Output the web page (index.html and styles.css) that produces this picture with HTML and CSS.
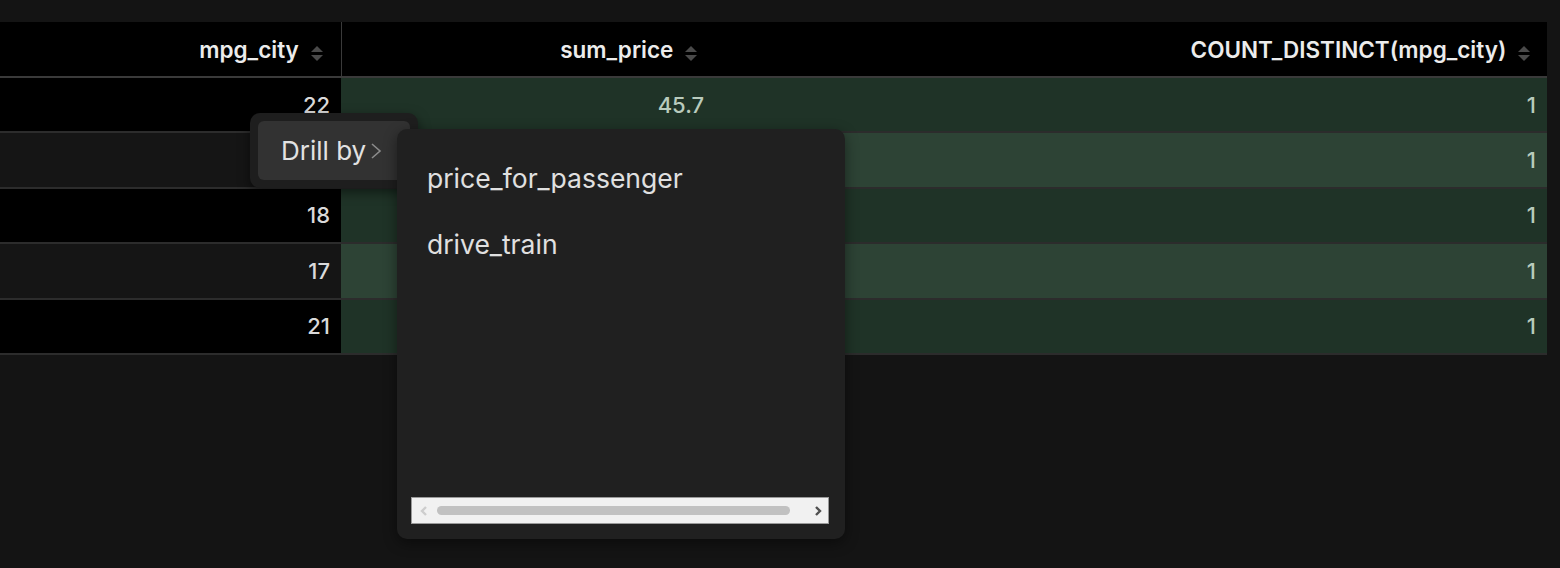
FILE: index.html
```html
<!DOCTYPE html>
<html lang="en">
<head>
  <meta charset="UTF-8" />
  <title>Drill by</title>
  <link rel="stylesheet" href="styles.css">
</head>
<body>
  <div class="chart">
    <table class="grid">
      <thead>
        <tr>
          <th class="col-city">mpg_city <span class="sort"></span></th>
          <th class="col-price">sum_price <span class="sort"></span></th>
          <th class="col-count">COUNT_DISTINCT(mpg_city) <span class="sort"></span></th>
        </tr>
      </thead>
      <tbody>
        <tr><td>22</td><td class="metric">45.7</td><td class="metric">1</td></tr>
        <!-- values under the open menu are hidden -->
        <tr><td></td><td class="metric"></td><td class="metric">1</td></tr>
        <tr><td>18</td><td class="metric"></td><td class="metric">1</td></tr>
        <tr><td>17</td><td class="metric"></td><td class="metric">1</td></tr>
        <tr><td>21</td><td class="metric"></td><td class="metric">1</td></tr>
      </tbody>
    </table>

    <div class="context-menu">
      <div class="menu-item">
        Drill by
        <svg class="chevron" width="14" height="20" viewBox="0 0 14 20">
          <polyline points="3,3 11,10 3,17" fill="none" stroke="#8c8c8c" stroke-width="1.6"/>
        </svg>
      </div>
    </div>

    <div class="submenu">
      <ul class="submenu-list">
        <li>price_for_passenger</li>
        <li>drive_train</li>
      </ul>
      <div class="scrollbar">
        <svg class="arrow" width="8" height="10" viewBox="0 0 8 10">
          <polyline points="6,1 2,5 6,9" fill="none" stroke="#cdcdcd" stroke-width="2.4"/>
        </svg>
        <span class="thumb"></span>
        <svg class="arrow" width="8" height="10" viewBox="0 0 8 10">
          <polyline points="2,1 6,5 2,9" fill="none" stroke="#505050" stroke-width="2.4"/>
        </svg>
      </div>
    </div>
  </div>
</body>
</html>
```

FILE: styles.css
```css
* {
  box-sizing: border-box;
  margin: 0;
  padding: 0;
}

body {
  background: #141414;
  font-family: Inter, 'Noto Sans', sans-serif;
  color: #d9d9d9;
  width: 1560px;
  height: 568px;
  overflow: hidden;
}

.chart {
  position: relative;
  padding-top: 22px;
  height: 568px;
}

.grid {
  width: 1547px;
  border-collapse: collapse;
  table-layout: fixed;
}

.grid th {
  background: #000;
  color: #ececec;
  font-size: 22.5px;
  font-weight: 600;
  text-align: right;
  height: 55px;
  padding: 0 16px 0 0;
  border-bottom: 2px solid #3a3a3a;
  white-space: nowrap;
}

.grid th.col-city {
  width: 341px;
  padding-right: 18px;
  border-right: 1px solid #3a3a3a;
}

.grid th.col-price {
  width: 371px;
  padding-right: 15px;
}

.grid th.col-count {
  padding-right: 17px;
}

.sort {
  display: inline-block;
  width: 12px;
  height: 15px;
  margin-left: 6px;
  vertical-align: -3px;
  position: relative;
}

.sort::before,
.sort::after {
  content: "";
  position: absolute;
  left: 0;
  border-left: 6px solid transparent;
  border-right: 6px solid transparent;
}

.sort::before {
  top: 0;
  border-bottom: 6px solid #4a4a4a;
}

.sort::after {
  bottom: 0;
  border-top: 6px solid #4a4a4a;
}

.grid td {
  height: 55.4px;
  font-size: 22px;
  font-weight: 500;
  text-align: right;
  padding: 0 11px 0 0;
  border-bottom: 2px solid #2c2c2c;
  background: #000;
  color: #dadada;
}

.grid tbody tr:nth-child(even) td {
  background: #151515;
}

.grid td.metric {
  background: #1f3327;
  color: #b9cbbd;
}

.grid tbody tr:nth-child(even) td.metric {
  background: #2d4335;
}

.grid td.metric:nth-child(2) {
  padding-right: 8px;
}

/* context menu overlay */
.context-menu {
  position: absolute;
  left: 250px;
  top: 113px;
  width: 168px;
  padding: 8px;
  background: #1e1e1e;
  border-radius: 10px;
  box-shadow: 0 4px 12px rgba(0, 0, 0, 0.5);
}

.menu-item {
  height: 59px;
  display: flex;
  align-items: center;
  padding-left: 23px;
  background: #323232;
  border-radius: 6px;
  font-size: 26px;
  color: #e2e2e2;
}

.chevron {
  margin-left: 3px;
  margin-top: 1px;
}

.submenu {
  position: absolute;
  left: 397px;
  top: 129px;
  width: 448px;
  height: 410px;
  background: #202020;
  border-radius: 10px;
  box-shadow: 0 4px 14px rgba(0, 0, 0, 0.45);
  padding: 16px 16px 0 14px;
  display: flex;
  flex-direction: column;
}

.submenu-list {
  list-style: none;
  flex: 1;
}

.submenu-list li {
  height: 66px;
  display: flex;
  align-items: center;
  padding-left: 16px;
  font-size: 26.5px;
  color: #e0e0e0;
}

.scrollbar {
  height: 27px;
  margin-bottom: 15px;
  background: #f1f1f1;
  border: 1px solid #9a9a9a;
  display: flex;
  align-items: center;
  padding: 0 6px 0 8px;
  gap: 9px;
}

.thumb {
  flex: 1;
  height: 9px;
  border-radius: 5px;
  background: #c1c1c1;
  margin-right: 15px;
}

.arrow {
  flex: none;
}
```
